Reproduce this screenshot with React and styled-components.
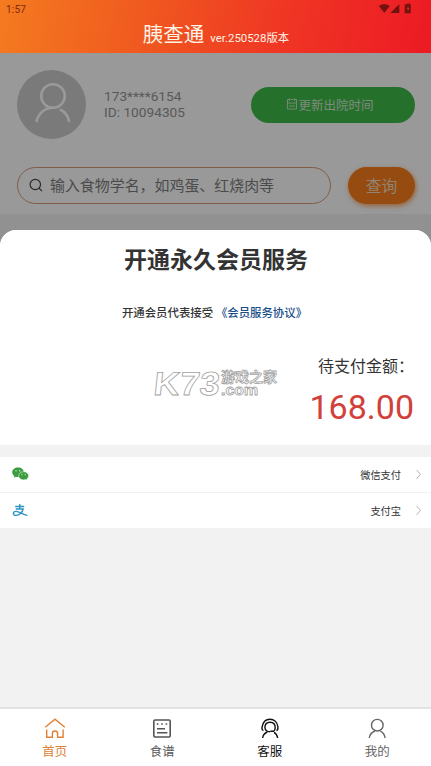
import React from 'react';
import styled, { createGlobalStyle } from 'styled-components';

const GlobalStyle = createGlobalStyle`
  * {
    box-sizing: border-box;
  }
  body {
    margin: 0;
    font-family: Roboto, 'Noto Sans CJK SC', sans-serif;
    color: #333;
  }
  button {
    font-family: inherit;
    border: none;
    padding: 0;
  }
`;

const Screen = styled.div`
  width: 100%;
  height: 100vh;
  display: flex;
  flex-direction: column;
  overflow: hidden;
  background: #919191;
`;

// header
const Header = styled.header`
  height: 53px;
  flex: none;
  display: flex;
  flex-direction: column;
  background: linear-gradient(100deg, #f47b20 0%, #f0581f 34%, #ef3524 66%, #ed1c24 97%);
`;

const StatusBar = styled.div`
  height: 18px;
  padding: 0 19px 0 6px;
  display: flex;
  align-items: center;
  justify-content: space-between;
  font-size: 10px;
  letter-spacing: 0.2px;
  color: #7c2a0e;
`;

const StatusIcons = styled.svg`
  width: 34px;
  height: 12px;
  display: block;
`;

const HeaderTitle = styled.div`
  height: 35px;
  padding-left: 1px;
  display: flex;
  align-items: baseline;
  justify-content: center;
  gap: 6px;
  line-height: 35px;
  color: #fff3e6;
`;

const AppName = styled.span`
  font-size: 20.5px;
`;

const Version = styled.span`
  font-size: 11.4px;
`;

// page under the mask
const Top = styled.section`
  position: relative;
  height: 161px;
  flex: none;
  padding: 17px 16px 0 17px;
  background: #fff;
`;

const Mask = styled.div`
  position: absolute;
  inset: 0;
  background: rgba(0, 0, 0, 0.4);
`;

const Profile = styled.div`
  height: 69px;
  display: flex;
  align-items: center;
`;

const Avatar = styled.div`
  width: 69px;
  height: 69px;
  border-radius: 50%;
  background: #cbcbcb;

  svg {
    display: block;
  }
`;

const UserInfo = styled.div`
  flex: 1;
  margin: -2px 0 0 18px;
  font-size: 13.7px;
  line-height: 16px;
  color: #959595;
`;

const Pill = styled.button`
  width: ${(p) => p.$width}px;
  height: ${(p) => p.$height}px;
  border-radius: 20px;
  display: flex;
  align-items: center;
  justify-content: center;
  padding: 0 ${(p) => p.$shift || 0}px 1px 0;
  color: ${(p) => p.$text};
  font-size: ${(p) => p.$size}px;
  background: ${(p) => p.$color};
  box-shadow: ${(p) => p.$shadow || 'none'};
`;

const SearchRow = styled.div`
  margin-top: 28px;
  display: flex;
  justify-content: space-between;
`;

const SearchBox = styled.div`
  width: 314px;
  height: 37px;
  padding: 0 0 2px 11px;
  display: flex;
  align-items: center;
  gap: 7px;
  border: 1px solid #d59a76;
  border-radius: 19px;
  font-size: 14.95px;
  color: #7d7d7d;
`;

// payment sheet
const Sheet = styled.section`
  position: relative;
  flex: 1;
  margin-top: 16px;
  border-radius: 16px 16px 0 0;
  overflow: hidden;
  background: #f2f2f2;
`;

const Summary = styled.div`
  height: 215px;
  background: #fff;
  display: flex;
  flex-direction: column;
`;

const SheetTitle = styled.h1`
  margin: 15px 0 0;
  padding-left: 1px;
  font-size: 23px;
  line-height: 32px;
  font-weight: 700;
  text-align: center;
`;

const Agreement = styled.p`
  margin: 27px 0 0;
  padding-right: 2px;
  font-size: 11.4px;
  line-height: 18px;
  font-weight: 500;
  text-align: center;

  a {
    color: #174d88;
  }
`;

const AmountLabel = styled.div`
  margin-top: 33px;
  padding-right: 17px;
  font-size: 16px;
  line-height: 24px;
  text-align: right;
`;

const Amount = styled.div`
  margin-top: 7px;
  padding-right: 17px;
  font-size: 34px;
  line-height: 42px;
  text-align: right;
  color: #d2403a;
`;

const Methods = styled.div`
  margin-top: 12px;
  background: #fff;
`;

const Method = styled.div`
  height: 36px;
  padding: 0 8px 0 12px;
  display: flex;
  align-items: center;
  justify-content: space-between;
  font-size: 10.2px;
  border-bottom: 1px solid #f1f1f1;
`;

const MethodName = styled.div`
  display: flex;
  align-items: center;
  gap: 13px;
  margin-top: -1px;
`;

const Watermark = styled.svg`
  position: absolute;
  left: 150px;
  top: 135px;
  width: 132px;
  height: 36px;
  fill: #fff;
  stroke: #a2a2a2;
  stroke-width: 0.8;
`;

// bottom navigation
const TabBar = styled.nav`
  height: 59px;
  flex: none;
  display: flex;
  padding-left: 1px;
  border-top: 2px solid #e4e4e4;
  background: #fff;
`;

const Tab = styled.div`
  flex: 1;
  padding-top: 9px;
  display: flex;
  flex-direction: column;
  align-items: center;
  font-size: 12.5px;
  line-height: 18px;
  color: ${(p) => p.$color};

  svg {
    margin-bottom: 3px;
  }
`;

const iconProps = { fill: 'none', stroke: 'currentColor', strokeWidth: 1.4 };

const HomeIcon = () => (
  <svg width="22" height="22" viewBox="0 0 22 22" {...iconProps}>
    <path d="M1.2 9.3 11 1.2l9.800 8.100M2.700 11.500v7.700h5.700v-3.600a2.600 2.600 0 0 1 5.200 0v3.600h5.500v-7.700" />
  </svg>
);

const RecipeIcon = () => (
  <svg width="22" height="22" viewBox="0 0 22 22" {...iconProps} strokeWidth="1.6">
    <rect x="2.8" y="2" width="16.4" height="17" rx="1.2" />
    <path d="M5.800 6h1.600M10.200 6h1.600M14.600 6h1.600M6 10.700h8M6 14.700h10.400" />
  </svg>
);

const ServiceIcon = () => (
  <svg width="22" height="22" viewBox="0 0 22 22" {...iconProps}>
    <path d="M4.400 12.600c-1.600-.5-1.700-1.600-1.300-3.600C3.900 4.300 7 1.300 11 1.300s7.300 3 7.900 7.500c.2 2-.1 3.300-1.400 3.800" />
    <path d="M5.900 9.900C5.900 6.200 8 4.200 11 4.200s5.200 2 5.200 5.600c0 1.500-.6 2.700-1.500 3.400h-3.400M5.900 9.500c.3 2.700 2.400 4.300 5.200 4.300M3.600 20c.5-3 2.200-5 4.700-6M15 14.300c2 1.100 3.300 3 3.700 5.700" />
  </svg>
);

const MineIcon = () => (
  <svg width="22" height="22" viewBox="0 0 22 22" {...iconProps}>
    <circle cx="11.3" cy="7.2" r="5.8" />
    <path d="M3.200 20c.6-3.600 2.700-5.900 5.800-7M14.300 13.200c2.700 1.200 4.300 3.500 4.900 6.800" />
  </svg>
);

const WechatIcon = () => (
  <svg width="17" height="15" viewBox="0 0 17 15">
    <path fill="#3b9c40" d="M6 .6C2.800.6.2 2.700.2 5.300c0 1.500.8 2.800 2.100 3.700l-.5 1.800 2.100-1c.7.2 1.400.3 2.100.3 3.200 0 5.800-2.100 5.800-4.800S9.200.6 6 .6z" />
    <path fill="#3b9c40" stroke="#fff" strokeWidth=".5" d="M11.600 4.700c-2.800 0-5 1.800-5 4.100s2.200 4.100 5 4.100c.6 0 1.200-.1 1.700-.3l1.800.9-.4-1.500c1.200-.8 1.900-1.900 1.900-3.200 0-2.300-2.200-4.100-5-4.100z" />
    <g fill="#d7f2d5">
      <circle cx="4" cy="3.8" r=".7" />
      <circle cx="7.7" cy="3.8" r=".7" />
      <circle cx="10" cy="7.6" r=".6" />
      <circle cx="13.2" cy="7.6" r=".6" />
    </g>
  </svg>
);

const AlipayIcon = () => (
  <svg width="17" height="15" viewBox="0 0 17 15" fill="none" stroke="#2b92c4" strokeWidth="1.4">
    <path d="M3.200 3.500h9M7.800 1v5M3.800 6h7.300c-.6 3.300-3.600 6.400-7.100 6.400-1.500 0-2.600-.8-2.600-2s1.200-2 2.600-2c3.600 0 6.500 3.500 11.400 4" />
  </svg>
);

const Arrow = () => (
  <svg width="9" height="12" viewBox="0 0 9 12" fill="none" stroke="#b5b5b5" strokeWidth="1">
    <path d="M2.500 1.900 6.500 6.400 2.500 10.900" />
  </svg>
);

const methods = [
  { name: '微信支付', Icon: WechatIcon },
  { name: '支付宝', Icon: AlipayIcon },
];

const tabs = [
  { name: '首页', Icon: HomeIcon, color: '#df8136' },
  { name: '食谱', Icon: RecipeIcon, color: '#555' },
  { name: '客服', Icon: ServiceIcon, color: '#111' },
  { name: '我的', Icon: MineIcon, color: '#666' },
];

function PageHeader() {
  return (
    <Header>
      <StatusBar>
        <span>1:57</span>
        <StatusIcons viewBox="0 0 34 12" fill="#72130f">
          <path d="M.8 3.100C4 .7 8.600.7 11.800 3.100L6.300 9.700z" />
          <path d="M21.300 1v9h-9z" />
          <path d="M28 1.300h1.200V.5h2.400v.8h1.200v9H26.700v-9z" />
          <path d="M30.300 3l-1.700 3h1.200v2.300l1.600-3.200h-1.100z" fill="#d83228" />
        </StatusIcons>
      </StatusBar>
      <HeaderTitle>
        <AppName>胰查通</AppName>
        <Version>ver.250528版本</Version>
      </HeaderTitle>
    </Header>
  );
}

function UserPanel() {
  return (
    <Top>
      <Profile>
        <Avatar>
          <svg width="69" height="69" viewBox="0 0 69 69" fill="none" stroke="#fff" strokeWidth="2.6">
            <circle cx="36" cy="26" r="11.8" />
            <path d="M19.500 52c1.500-8.500 8-14.200 16.500-14.200M43 39.500c5 2.300 8.300 6.700 9.300 12.500" />
          </svg>
        </Avatar>
        <UserInfo>
          <div>173****6154</div>
          <div>ID: 10094305</div>
        </UserInfo>
        <Pill $width={164} $height={36} $size={12.5} $shift={6} $color="#3fbb49" $text="#d3e6d0">
          <svg width="12" height="12" viewBox="0 0 12 12" fill="none" stroke="currentColor" strokeWidth="0.9">
            <path d="M3 1.500H1.500V11h9V1.500H9M4.500 1.500h3M3.500.3v2.500M8.500.3v2.500M1.500 5h9M3 8h6" />
          </svg>
          更新出院时间
        </Pill>
      </Profile>
      <SearchRow>
        <SearchBox>
          <svg width="14" height="14" viewBox="0 0 14 14" fill="none" stroke="#444" strokeWidth="1.2">
            <circle cx="6.3" cy="6.5" r="5.2" />
            <path d="M10 10.200l3 3" />
          </svg>
          输入食物学名，如鸡蛋、红烧肉等
        </SearchBox>
        <Pill $width={67} $height={37} $size={15.8} $color="#fa7d1b" $text="#f3d9bd" $shadow="1px 2px 5px rgba(250, 125, 27, 0.7)">
          查询
        </Pill>
      </SearchRow>
      <Mask />
    </Top>
  );
}

function PaySheet() {
  return (
    <Sheet>
      <Summary>
        <SheetTitle>开通永久会员服务</SheetTitle>
        <Agreement>
          开通会员代表接受 <a>《会员服务协议》</a>
        </Agreement>
        <AmountLabel>待支付金额：</AmountLabel>
        <Amount>168.00</Amount>
      </Summary>
      <Methods>
        {methods.map(({ name, Icon }) => (
          <Method key={name}>
            <Icon />
            <MethodName>
              {name}
              <Arrow />
            </MethodName>
          </Method>
        ))}
      </Methods>
      <Watermark viewBox="0 0 132 36">
        <g fontFamily="Liberation Sans" fontWeight="700" fontSize="33">
          <text x="3" y="30" textLength="66" lengthAdjust="spacingAndGlyphs" transform="translate(3 0) skewX(-6)">K73</text>
        </g>
        <text x="71" y="17" fontFamily="Noto Sans CJK SC" fontWeight="700" fontSize="14" textLength="56" lengthAdjust="spacingAndGlyphs">游戏之家</text>
        <text x="71" y="30" fontFamily="Liberation Sans" fontWeight="700" fontSize="15" textLength="37" lengthAdjust="spacingAndGlyphs">.com</text>
      </Watermark>
    </Sheet>
  );
}

export default function App() {
  return (
    <>
      <GlobalStyle />
      <Screen>
        <PageHeader />
        <UserPanel />
        <PaySheet />
        <TabBar>
          {tabs.map(({ name, Icon, color }) => (
            <Tab key={name} $color={color}>
              <Icon />
              {name}
            </Tab>
          ))}
        </TabBar>
      </Screen>
    </>
  );
}
